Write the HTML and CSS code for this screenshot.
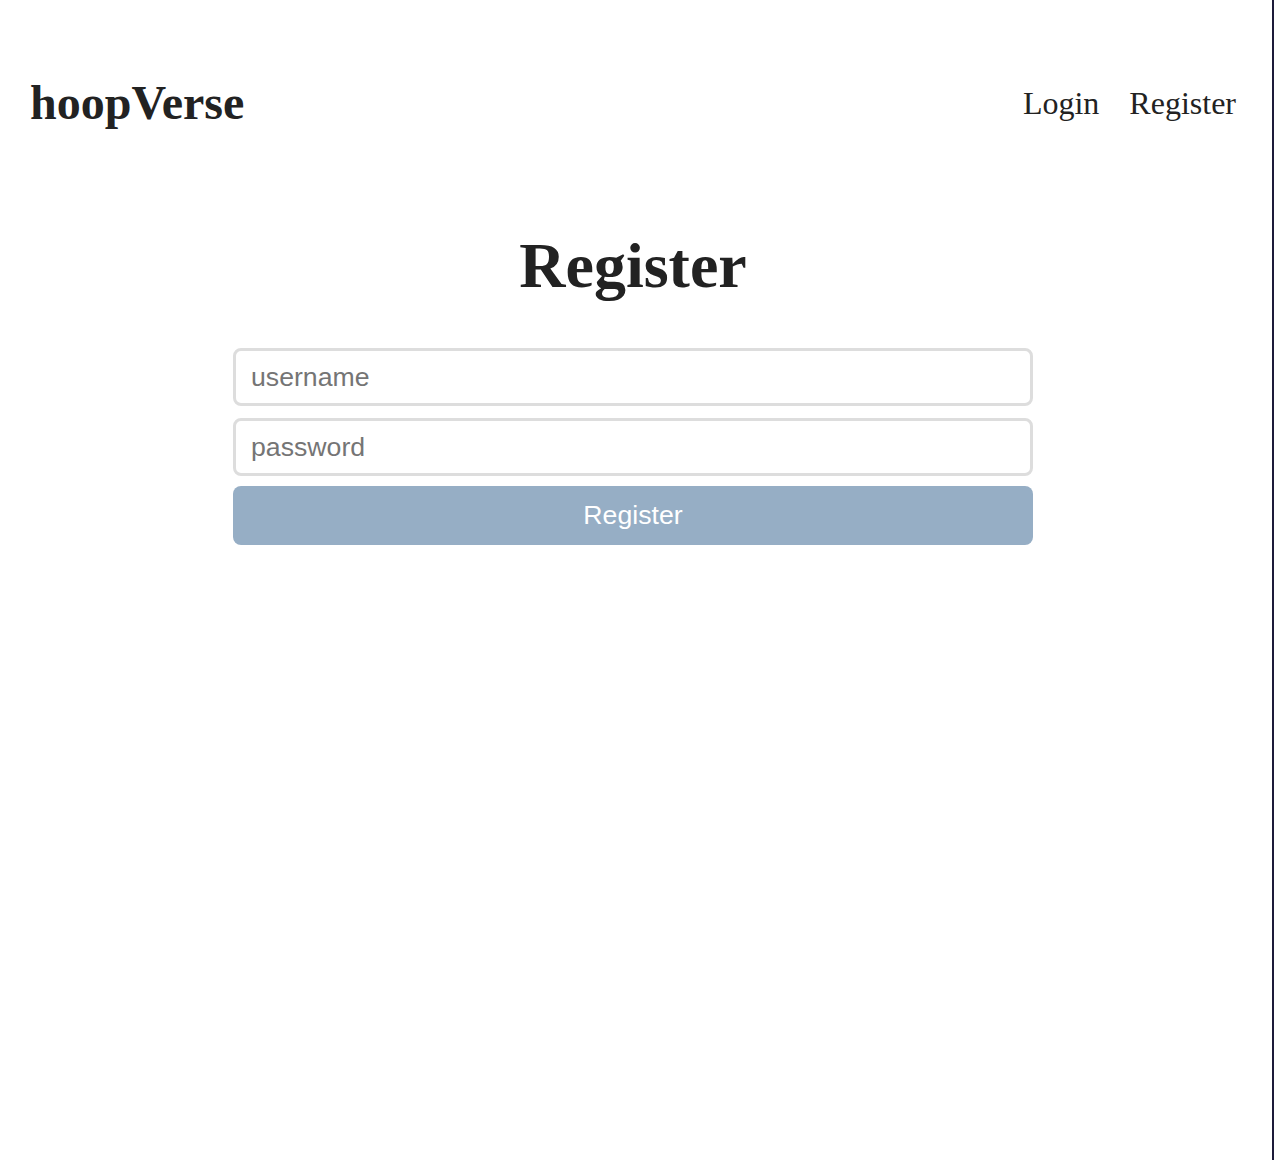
FILE: index.html
```html
<!DOCTYPE html>
<html lang="en">
<head>
<meta charset="utf-8">
<title>hoopVerse - Register</title>
<link rel="stylesheet" href="styles.css">
</head>
<body>
  <div class="page">
    <header class="site-header">
      <div class="logo">hoopVerse</div>
      <nav class="nav">
        <a class="nav-link" href="#">Login</a>
        <a class="nav-link" href="#">Register</a>
      </nav>
    </header>
    <main class="main">
      <h1 class="title">Register</h1>
      <form class="form">
        <input class="field" type="text" placeholder="username">
        <input class="field" type="password" placeholder="password">
        <button class="submit" type="button">Register</button>
      </form>
    </main>
  </div>
</body>
</html>
```

FILE: styles.css
```css
html, body {
  margin: 0;
  padding: 0;
}

body {
  min-height: 100vh;
  box-sizing: border-box;
  border-right: 2px solid #1d1b3a;
  background: #ffffff;
  color: #222222;
  font-family: "Liberation Serif", "Times New Roman", serif;
}

.page {
  padding: 0 36px 0 30px;
}

.site-header {
  display: flex;
  align-items: center;
  justify-content: space-between;
  padding-top: 76px;
}

.logo {
  font-size: 48px;
  font-weight: 700;
  line-height: 53px;
}

.nav {
  display: flex;
  gap: 30px;
}

.nav-link {
  font-size: 32px;
  color: #222222;
  text-decoration: none;
  line-height: 36px;
}

.main {
  display: flex;
  flex-direction: column;
  align-items: center;
}

.title {
  margin: 101px 0 0;
  font-size: 64px;
  font-weight: 700;
  line-height: 71px;
}

.form {
  width: 800px;
  margin-top: 47px;
  display: flex;
  flex-direction: column;
}

.field {
  box-sizing: border-box;
  height: 58px;
  width: 100%;
  border: 3px solid #dddddd;
  border-radius: 8px;
  padding: 0 15px;
  font-family: "Liberation Sans", Arial, sans-serif;
  font-size: 26.67px;
  color: #222222;
  outline: none;
  margin-bottom: 12px;
}

.field::placeholder {
  color: #757575;
}

.field + .submit {
  margin-top: -2px;
}

.submit {
  box-sizing: border-box;
  height: 59px;
  width: 100%;
  border: none;
  border-radius: 8px;
  background: #96aec5;
  color: #ffffff;
  font-family: "Liberation Sans", Arial, sans-serif;
  font-size: 26.67px;
  cursor: pointer;
}
```
